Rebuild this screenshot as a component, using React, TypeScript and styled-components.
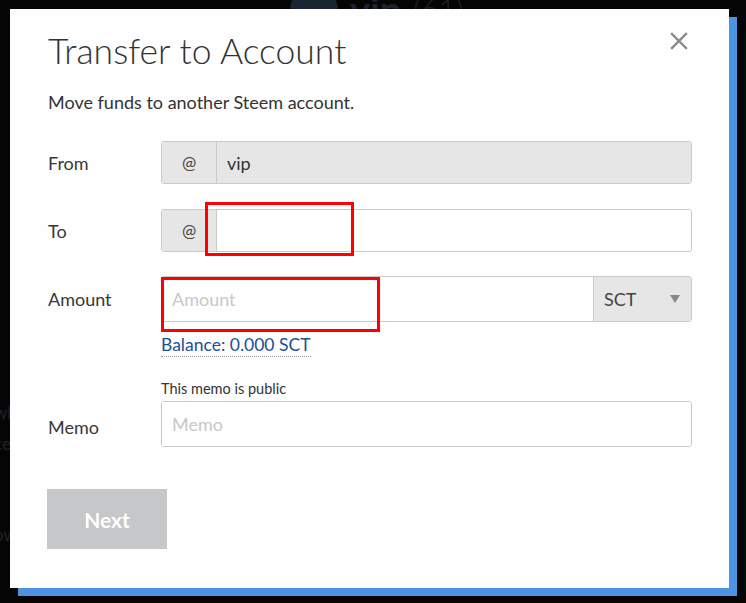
import React, { FC } from 'react';
import styled, { createGlobalStyle } from 'styled-components';

const GlobalStyle = createGlobalStyle`
  html, body {
    margin: 0;
    padding: 0;
    background: #050506;
  }
  * {
    box-sizing: border-box;
  }
`

const font = `Lato, "Open Sans", "Liberation Sans", sans-serif`

const App: FC = () => {
  return (
    <>
      <GlobalStyle/>
      <Page>
        <BehindHeader>
          <Avatar/>
          <BehindName>vip</BehindName>
          <BehindRep>(61)</BehindRep>
        </BehindHeader>
        <BehindSide>
          <span>wl</span>
          <span>ce</span>
          <span>ow</span>
        </BehindSide>

        <Modal>
          <CloseBtn aria-label="close">
            <svg width="18" height="18" viewBox="0 0 18 18">
              <path d="M2 2 L16 16 M16 2 L2 16" stroke="#8a8a8a" strokeWidth="2.4" strokeLinecap="square"/>
            </svg>
          </CloseBtn>
          <Title>Transfer to Account</Title>
          <Subtitle>Move funds to another Steem account.</Subtitle>

          <Form>
            <Row $gap={25}>
              <Label>From</Label>
              <Group>
                <Addon>@</Addon>
                <Field value="vip" disabled readOnly/>
              </Group>
            </Row>

            <Row $gap={24}>
              <Label>To</Label>
              <Group>
                <Addon>@</Addon>
                <Field defaultValue=""/>
                <Mark $left={43} $top={-8} $width={149} $height={54}/>
              </Group>
            </Row>

            <Row $gap={0}>
              <Label>Amount</Label>
              <Group $tall>
                <Field placeholder="Amount"/>
                <Select>
                  <span>SCT</span>
                  <Caret/>
                </Select>
                <Mark $left={-1} $top={0} $width={219} $height={55}/>
              </Group>
            </Row>

            <BalanceRow>
              <span/>
              <Balance>Balance: 0.000 SCT</Balance>
            </BalanceRow>

            <MemoGrid>
              <Hint>This memo is public</Hint>
              <MemoLabel>Memo</MemoLabel>
              <Group $tall>
                <Field placeholder="Memo"/>
              </Group>
            </MemoGrid>
          </Form>

          <NextBtn disabled>Next</NextBtn>
        </Modal>
      </Page>
    </>
  )
}

export default App

const Page = styled.div`
  position: relative;
  width: 746px;
  height: 603px;
  overflow: hidden;
  background: #050506;
  font-family: ${font};
`
const BehindHeader = styled.div`
  display: flex;
  align-items: flex-start;
  gap: 12px;
  margin: -14px 0 0 290px;
  color: #1d232c;
`
const Avatar = styled.div`
  width: 48px;
  height: 48px;
  border-radius: 50%;
  background: #1a2330;
`
const BehindName = styled.span`
  font-size: 38px;
  font-weight: 700;
`
const BehindRep = styled.span`
  font-size: 30px;
  font-weight: 300;
  margin-top: 4px;
`
const BehindSide = styled.div`
  display: flex;
  flex-direction: column;
  gap: 10px;
  margin: 368px 0 0 -6px;
  font-size: 17px;
  color: #1f232a;

  span:last-child {
    margin-top: 60px;
  }
`
const Modal = styled.div`
  position: absolute;
  left: 10px;
  top: 9px;
  width: 719px;
  height: 579px;
  background: #fefefe;
  box-shadow: 8px 8px 0 #4a94e1;
  padding: 20px 37px 0 38px;
  color: #333;
`
const CloseBtn = styled.button`
  position: absolute;
  top: 23px;
  right: 41px;
  border: none;
  background: none;
  padding: 0;
  cursor: pointer;
`
const Title = styled.h1`
  margin: 0;
  font-size: 35.5px;
  font-weight: 300;
  line-height: 44px;
  color: #333;
`
const Subtitle = styled.p`
  margin: 18px 0 0;
  font-size: 18px;
  line-height: 23px;
  color: #333;
`
const Form = styled.div`
  display: flex;
  flex-direction: column;
  margin-top: 27px;
`
const Row = styled.div<{ $gap: number }>`
  display: grid;
  grid-template-columns: 113px 531px;
  align-items: center;
  margin-bottom: ${p => p.$gap}px;
`
const Label = styled.label`
  font-size: 18px;
  color: #383838;
`
const MemoLabel = styled(Label)`
  grid-area: label;
  padding-top: 5px;
`
const Group = styled.div<{ $tall?: boolean }>`
  position: relative;
  display: flex;
  height: ${p => p.$tall ? '46px' : '43px'};
  border: 1px solid #cacaca;
  border-radius: 3px;
  background: #fefefe;
`
const Addon = styled.span`
  width: 55px;
  display: grid;
  place-items: center;
  background: #e6e6e6;
  border-right: 1px solid #cacaca;
  border-radius: 2px 0 0 2px;
  font-size: 17px;
  color: #444;
`
const Field = styled.input`
  flex: 1;
  min-width: 0;
  border: none;
  outline: none;
  padding: 0 10px;
  font-family: ${font};
  font-size: 18px;
  color: #333;
  background: #fefefe;
  border-radius: 0 3px 3px 0;

  &:disabled {
    background: #e6e6e6;
    color: #333;
  }
  &::placeholder {
    color: #c8c8c8;
  }
`
const Select = styled.div`
  width: 98px;
  display: flex;
  align-items: center;
  justify-content: space-between;
  padding: 0 11px 0 10px;
  background: #e6e6e6;
  border-left: 1px solid #cacaca;
  font-size: 18px;
  color: #444;
`
const Caret = styled.span`
  width: 0;
  height: 0;
  border-left: 5px solid transparent;
  border-right: 5px solid transparent;
  border-top: 8px solid #888;
`
const Mark = styled.span<{ $left: number; $top: number; $width: number; $height: number }>`
  position: absolute;
  left: ${p => p.$left}px;
  top: ${p => p.$top}px;
  width: ${p => p.$width}px;
  height: ${p => p.$height}px;
  border: 3px solid #f00;
  pointer-events: none;
`
const BalanceRow = styled.div`
  display: grid;
  grid-template-columns: 113px auto;
  justify-items: start;
  margin-top: 12px;
`
const Balance = styled.a`
  font-size: 17.5px;
  color: #1a5099;
  text-decoration: none;
  border-bottom: 1px dotted #999;
  line-height: 22px;
  cursor: pointer;
`
const MemoGrid = styled.div`
  display: grid;
  grid-template-columns: 113px 531px;
  grid-template-areas:
    ". hint"
    "label field";
  align-items: center;
  row-gap: 4px;
  margin-top: 23px;

  ${Group} { grid-area: field; }
`
const Hint = styled.div`
  grid-area: hint;
  font-size: 14.5px;
  color: #333;
`
const NextBtn = styled.button`
  margin-top: 42px;
  margin-left: -1px;
  width: 120px;
  height: 60px;
  border: none;
  background: #c6c7c8;
  color: #fff;
  font-family: ${font};
  font-weight: 700;
  font-size: 21px;
`
